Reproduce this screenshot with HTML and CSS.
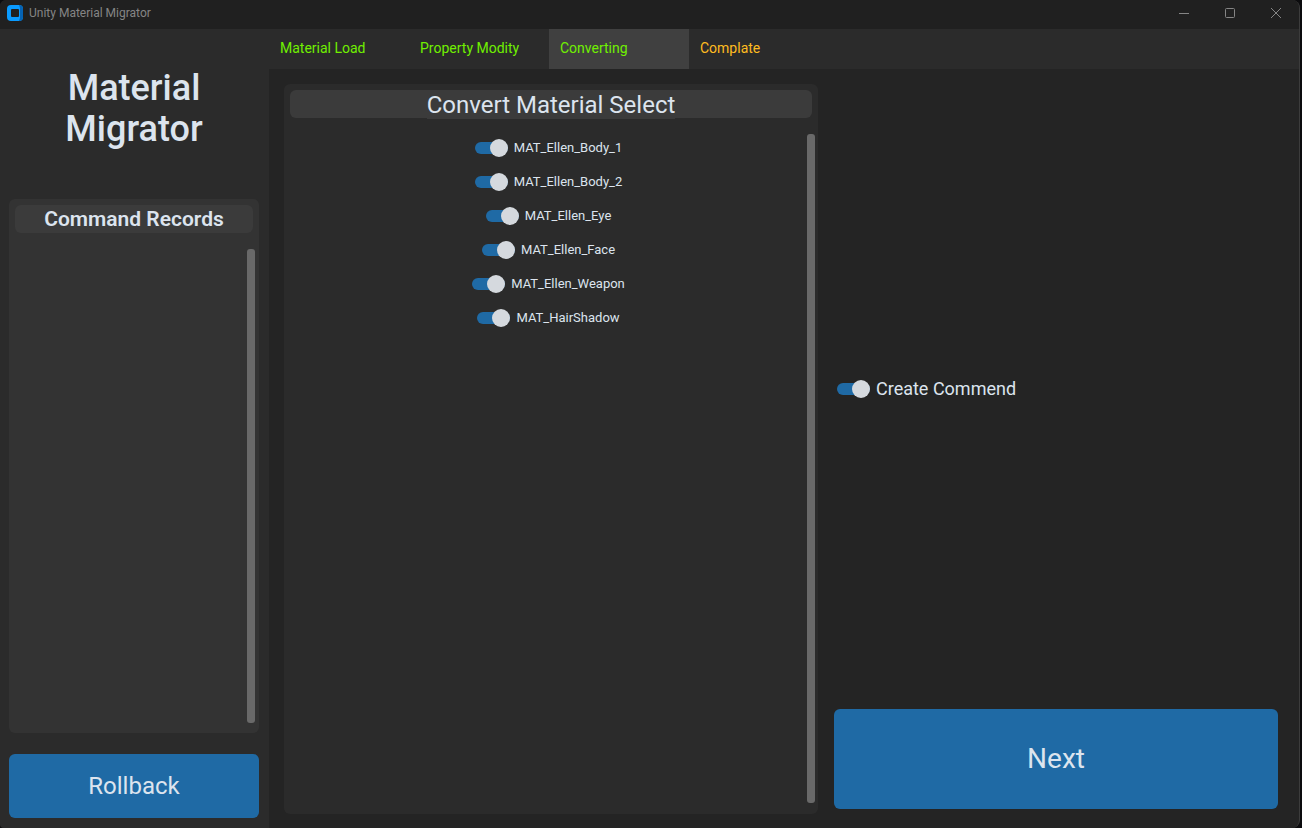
FILE: index.html
```html
<!DOCTYPE html>
<html lang="en">
<head>
<meta charset="utf-8">
<title>Unity Material Migrator</title>
<link rel="stylesheet" href="styles.css">
</head>
<body>
<div class="window">
  <header class="titlebar">
    <svg class="logo" width="16" height="16" viewBox="0 0 16 16" aria-hidden="true">
      <rect width="16" height="16" rx="4" fill="#0a9bff"/>
      <path d="M12 0a4 4 0 0 1 4 4v8a4 4 0 0 1-4 4l1-3V3z" fill="#0563b5"/>
      <rect x="4" y="4" width="8" height="8" rx="1" fill="#202020"/>
    </svg>
    <span class="window-title">Unity Material Migrator</span>
    <div class="window-controls">
      <button type="button" class="window-button" aria-label="Minimize">
        <svg width="12" height="12" viewBox="0 0 12 12"><path d="M1 6.5h10" stroke="#858585" fill="none"/></svg>
      </button>
      <button type="button" class="window-button" aria-label="Maximize">
        <svg width="12" height="12" viewBox="0 0 12 12"><rect x="1.500" y="1.500" width="9" height="9" rx="1" stroke="#858585" fill="none"/></svg>
      </button>
      <button type="button" class="window-button" aria-label="Close">
        <svg width="12" height="12" viewBox="0 0 12 12"><path d="M1 1l10 10M11 1L1 11" stroke="#858585" fill="none"/></svg>
      </button>
    </div>
  </header>
  <div class="workspace">
    <aside class="sidebar">
      <h1 class="app-name">Material<br>Migrator</h1>
      <section class="records">
        <h2 class="panel-title records-title">Command Records</h2>
        <div class="scroll-area"><div class="scroll-content"></div><div class="scrollbar"></div></div>
      </section>
      <button type="button" class="action rollback">Rollback</button>
    </aside>
    <div class="stage">
      <nav class="tabs">
        <button type="button" class="tab">Material Load</button>
        <button type="button" class="tab">Property Modity</button>
        <button type="button" class="tab tab-active">Converting</button>
        <button type="button" class="tab tab-pending">Complate</button>
      </nav>
      <main class="content">
        <section class="materials">
          <h2 class="panel-title"><span class="title-label">Convert Material Select</span></h2>
          <div class="scroll-area">
            <div class="scroll-content material-list">
              <label class="toggle"><input type="checkbox" class="switch" checked>MAT_Ellen_Body_1</label>
              <label class="toggle"><input type="checkbox" class="switch" checked>MAT_Ellen_Body_2</label>
              <label class="toggle"><input type="checkbox" class="switch" checked>MAT_Ellen_Eye</label>
              <label class="toggle"><input type="checkbox" class="switch" checked>MAT_Ellen_Face</label>
              <label class="toggle"><input type="checkbox" class="switch" checked>MAT_Ellen_Weapon</label>
              <label class="toggle"><input type="checkbox" class="switch" checked>MAT_HairShadow</label>
            </div>
            <div class="scrollbar"></div>
          </div>
        </section>
        <section class="options">
          <div class="option-area">
            <label class="toggle toggle-large"><input type="checkbox" class="switch" checked>Create Commend</label>
          </div>
          <button type="button" class="action next">Next</button>
        </section>
      </main>
    </div>
  </div>
</div>
</body>
</html>
```

FILE: styles.css
```css
* { box-sizing: border-box; }
body {
  margin: 0;
  background: #0c0c0e;
  color: #dce4ee;
  font-family: Roboto, "Liberation Sans", sans-serif;
}
button { margin: 0; border: 0; padding: 0; color: inherit; font: inherit; background: none; }
h1, h2 { margin: 0; }
.window {
  display: flex;
  flex-direction: column;
  height: 100vh;
  margin-right: 2px;
  border-right: 1px solid #3c3c3c;
  border-radius: 6px 8px 8px 4px;
  background: #242424;
  overflow: hidden;
}
.titlebar {
  display: flex;
  align-items: center;
  gap: 6px;
  height: 29px;
  padding: 0 0 3px 7px;
  background: #202020;
}
.window-title { color: #858585; font-size: 12px; line-height: 16px; }
.window-controls { display: flex; margin-left: auto; }
.window-button { display: flex; align-items: center; justify-content: center; width: 46px; height: 26px; }
.workspace { display: flex; flex: 1; min-height: 0; }
.sidebar {
  display: flex;
  flex-direction: column;
  flex: 0 0 269px;
  padding: 39px 10px 10px 9px;
  background: #2b2b2b;
}
.app-name { margin-bottom: 49px; font-size: 36px; line-height: 41px; font-weight: 500; text-align: center; }
.records, .materials { display: flex; flex-direction: column; border-radius: 6px; padding: 6px; }
.records { flex: 1; margin-bottom: 21px; background: #333333; padding-right: 4px; padding-bottom: 10px; }
.panel-title {
  height: 28px;
  border-radius: 6px;
  background: #3b3b3b;
  font-size: 24px;
  line-height: 30px;
  font-weight: 400;
  text-align: center;
}
.records-title { margin-right: 2px; font-size: 21px; line-height: 28px; font-weight: 600; }
.title-label { display: inline-block; height: 29px; background: #3b3b3b; }
.scroll-area { display: flex; flex: 1; min-height: 0; padding-top: 16px; }
.scroll-content { flex: 1; }
.scrollbar { width: 8px; border-radius: 3px; background: #696969; }
.rollback { height: 64px; font-size: 24px; }
.action { border-radius: 6px; background: #1f6aa5; }
.stage { display: flex; flex: 1; flex-direction: column; min-width: 0; }
.tabs { display: flex; height: 40px; background: #2b2b2b; }
.tab { width: 140px; padding: 0 11px 2px; color: #70f000; font-size: 14px; text-align: left; }
.tab-active { background: #404040; }
.tab-pending { color: #ffbc20; }
.content {
  display: grid;
  grid-template-columns: 534fr 444fr;
  gap: 16px;
  flex: 1;
  min-height: 0;
  padding: 15px 21px 14px 15px;
}
.materials { background: #2b2b2b; padding-right: 3px; padding-bottom: 11px; }
.materials .panel-title { margin-right: 3px; }
.material-list { display: flex; flex-direction: column; align-items: center; gap: 10px; padding-top: 2px; }
.toggle { display: flex; align-items: center; gap: 6px; height: 24px; font-size: 13px; line-height: 16px; }
.toggle-large { height: 28px; font-size: 18px; line-height: 22px; }
.switch {
  appearance: none;
  display: flex;
  align-items: center;
  justify-content: flex-end;
  width: 33px;
  height: 12px;
  margin: 0;
  border-radius: 6px;
  background: #1f6aa5;
}
.switch::before { content: ""; flex: none; width: 18px; height: 18px; border-radius: 50%; background: #d5d9de; }
.switch:not(:checked) { justify-content: flex-start; }
.options { display: flex; flex-direction: column; padding-bottom: 5px; }
.option-area { display: flex; flex: 1; align-items: center; padding: 0 3px 16px; }
.next { height: 100px; padding-bottom: 2px; font-size: 28px; }
```
